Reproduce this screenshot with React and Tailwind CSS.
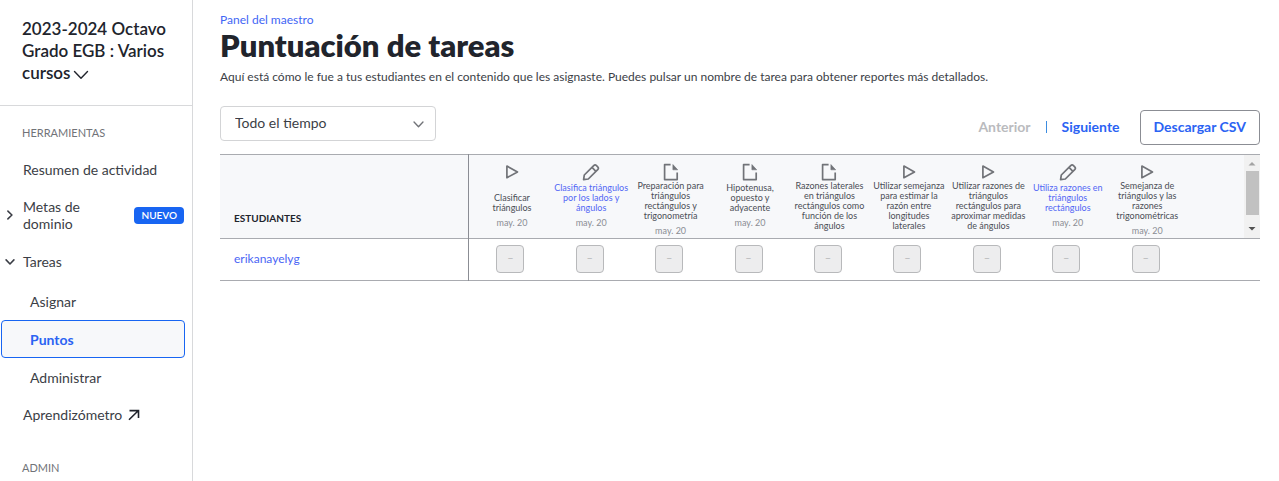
import React from 'react';

const assignments = [
  { type: 'video', title: 'Clasificar triángulos', date: 'may. 20' },
  { type: 'exercise', title: 'Clasifica triángulos por los lados y ángulos', date: 'may. 20' },
  { type: 'article', title: 'Preparación para triángulos rectángulos y trigonometría', date: 'may. 20' },
  { type: 'article', title: 'Hipotenusa, opuesto y adyacente', date: 'may. 20' },
  { type: 'article', title: 'Razones laterales en triángulos rectángulos como función de los ángulos' },
  { type: 'video', title: 'Utilizar semejanza para estimar la razón entre longitudes laterales' },
  { type: 'video', title: 'Utilizar razones de triángulos rectángulos para aproximar medidas de ángulos' },
  { type: 'exercise', title: 'Utiliza razones en triángulos rectángulos', date: 'may. 20' },
  { type: 'video', title: 'Semejanza de triángulos y las razones trigonométricas', date: 'may. 20' },
];

const students = ['erikanayelyg'];

function Chevron({ className, strokeWidth = 2 }) {
  return (
    <svg viewBox="0 0 16 10" className={className} fill="none" stroke="currentColor" aria-hidden="true">
      <path d="M1.5 1.5 8 8.2l6.5-6.7" strokeWidth={strokeWidth} strokeLinecap="round" strokeLinejoin="round" />
    </svg>
  );
}

function TypeIcon({ type }) {
  return (
    <svg viewBox="0 0 18 18" className="h-[18px] w-[18px] text-[#717378]" fill="none" stroke="currentColor" strokeWidth="1.7" strokeLinejoin="round" aria-hidden="true">
      {type === 'video' && <path d="M3.9 3.1v11.6l10.6-5.8z" />}
      {type === 'exercise' && (
        <>
          <path d="M1.6 16.6l.7-4.6 9.4-9.4a2 2 0 0 1 2.8 0l1.2 1.2a2 2 0 0 1 0 2.8L6.3 16z" />
          <path d="M10 4.4l3.9 3.9" />
        </>
      )}
      {type === 'article' && (
        <>
          <path d="M8.6 1.6H2.6v15h12.6V9.4" />
          <path d="M10.9 1.6v5.2h4.8z" fill="currentColor" strokeWidth="0.6" />
        </>
      )}
    </svg>
  );
}

function Sidebar() {
  return (
    <aside className="w-[193px] shrink-0 border-r border-[#d8d9db]">
      <div className="h-[106px] border-b border-[#d8d9db] pt-[18px] pr-4 pl-[22px]">
        <button type="button" className="text-left text-[17px] leading-[22px] font-semibold text-[#21242c]">
          2023-2024 Octavo Grado EGB : Varios cursos
          <Chevron strokeWidth={1.4} className="ml-[3px] inline h-[10px] w-4" />
        </button>
      </div>

      <nav className="text-[14px] leading-[17px] text-[#3b3e46]">
        <h2 className="pt-[19px] pl-[22px] text-[11px] leading-4 text-[#717378]">HERRAMIENTAS</h2>
        <a href="#resumen" className="mt-[20px] block pl-[23px]">Resumen de actividad</a>
        <a href="#metas" className="mt-[20px] flex items-center pr-2 pl-[5px]">
          <Chevron strokeWidth={2.6} className="h-[6px] w-[10px] -rotate-90" />
          <span className="ml-2 w-20">Metas de dominio</span>
          <span className="ml-auto rounded-[4px] bg-[#1865f2] px-[7px] text-[10px] font-semibold text-white">NUEVO</span>
        </a>
        <a href="#tareas" className="mt-[21px] flex items-center pl-[5px]">
          <Chevron strokeWidth={2.6} className="h-[6px] w-[10px]" />
          <span className="ml-2">Tareas</span>
        </a>
        <div className="mt-[12px] mr-[7px] ml-px">
          <a href="#asignar" className="flex h-[38px] items-center pl-[29px]">Asignar</a>
          <a href="#puntos" className="flex h-[38px] items-center rounded-[4px] border border-[#1865f2] bg-[#f7f8fa] pl-7 font-bold text-[#2b63f3]">Puntos</a>
          <a href="#administrar" className="flex h-[38px] items-center pl-[29px]">Administrar</a>
        </div>
        <a href="#aprendizometro" className="mt-[10px] flex items-center pl-[23px]">
          Aprendizómetro
          <svg viewBox="0 0 12 12" className="ml-[6px] h-3 w-3 text-[#21242c]" fill="none" stroke="currentColor" strokeWidth="1.6" aria-hidden="true">
            <path d="M1.5 1.6h9V9M10.2 1.8 1 10.8" />
          </svg>
        </a>
        <h2 className="pt-[37px] pl-[22px] text-[11px] leading-4 text-[#717378]">ADMIN</h2>
      </nav>
    </aside>
  );
}

function ScoresTable() {
  return (
    <table className="mt-[9px] w-full table-fixed border-collapse">
      <colgroup>
        <col className="w-[248px]" />
        {assignments.map((item) => (
          <col key={item.title} />
        ))}
        <col className="w-[77px]" />
      </colgroup>
      <thead>
        <tr className="border-y border-[#a9abb0] bg-[#f7f8fa]">
          <th scope="col" className="border-r border-[#8b8d94] pb-3 pl-[14px] text-left align-bottom text-[10px] leading-4 font-bold text-[#21242c]">
            ESTUDIANTES
          </th>
          {assignments.map((item) => (
            <th key={item.title} scope="col" className="pl-2 align-top font-normal">
              <div className="flex flex-col items-center pt-2 text-[9px] leading-[10px] text-[#4b4e56]">
                <TypeIcon type={item.type} />
                <div className="flex min-h-8 w-[75px] flex-col justify-end">
                  {item.type === 'exercise' ? (
                    <a href="#ejercicio" className="text-[#5267f5]">{item.title}</a>
                  ) : (
                    <span>{item.title}</span>
                  )}
                </div>
                {item.date && <span className="mt-[5px] text-[#8b8d94]">{item.date}</span>}
              </div>
            </th>
          ))}
          <td className="p-0">
            <div className="ml-auto flex h-[83px] w-4 flex-col items-center bg-[#f1f1f1]">
              <svg viewBox="0 0 16 16" className="h-4 w-4" aria-hidden="true">
                <path d="M4.5 10.5h7L8 7z" fill="#a3a3a3" />
              </svg>
              <div className="h-11 w-[13px] bg-[#c1c1c1]" />
              <svg viewBox="0 0 16 16" className="mt-auto h-4 w-4" aria-hidden="true">
                <path d="M4.5 5h7L8 8.5z" fill="#505050" />
              </svg>
            </div>
          </td>
        </tr>
      </thead>
      <tbody>
        {students.map((name) => (
          <tr key={name} className="h-[42px] border-b border-[#a9abb0]">
            <th scope="row" className="border-r border-[#8b8d94] pb-[2px] pl-[14px] text-left text-[12px] leading-4 font-normal">
              <a href="#estudiante" className="text-[#4b66f5]">{name}</a>
            </th>
            {assignments.map((item) => (
              <td key={item.title} className="pb-[2px] pl-[5px]">
                <div className="mx-auto flex h-7 w-7 items-center justify-center rounded-[4px] border border-[#b8b9bb] bg-[#ededee] text-[11px] text-[#b8b9bb]">
                  –
                </div>
              </td>
            ))}
            <td />
          </tr>
        ))}
      </tbody>
    </table>
  );
}

export default function App() {
  return (
    <div className="flex min-h-screen bg-white font-['Lato','Noto_Sans',sans-serif] text-[#21242c]">
      <Sidebar />
      <main className="min-w-0 flex-1 pt-3 pr-[19px] pl-[27px]">
        <a href="#panel" className="block text-[12px] leading-4 text-[#3f66f5]">Panel del maestro</a>
        <h1 className="text-[31px] leading-[34px] font-extrabold">Puntuación de tareas</h1>
        <p className="mt-[7px] text-[12px] leading-4 text-[#3b3e46]">
          Aquí está cómo le fue a tus estudiantes en el contenido que les asignaste. Puedes pulsar un nombre de tarea para obtener reportes más detallados.
        </p>

        <div className="mt-[21px] flex items-start justify-between">
          <div className="relative">
            <select aria-label="Periodo" className="h-[35px] w-[216px] appearance-none rounded-[4px] border border-[#d3d4d6] bg-white pb-[2px] pl-[14px] text-[14px] text-[#3b3e46]">
              <option>Todo el tiempo</option>
            </select>
            <Chevron className="pointer-events-none absolute top-[15px] right-3 h-[7px] w-[11px] text-[#717378]" />
          </div>
          <div className="flex items-center pt-[4px] text-[14px] font-bold text-[#2b63f3]">
            <button type="button" disabled className="pb-[3px] text-[#babbbe]">Anterior</button>
            <span className="mx-[15px] mb-[2px] h-3 w-px bg-[#3c8ce0]" />
            <button type="button" className="pb-[3px]">Siguiente</button>
            <button type="button" className="ml-5 h-[35px] rounded-[4px] border border-[#8b8d94] px-[13px] pb-[3px]">Descargar CSV</button>
          </div>
        </div>

        <ScoresTable />
      </main>
    </div>
  );
}
